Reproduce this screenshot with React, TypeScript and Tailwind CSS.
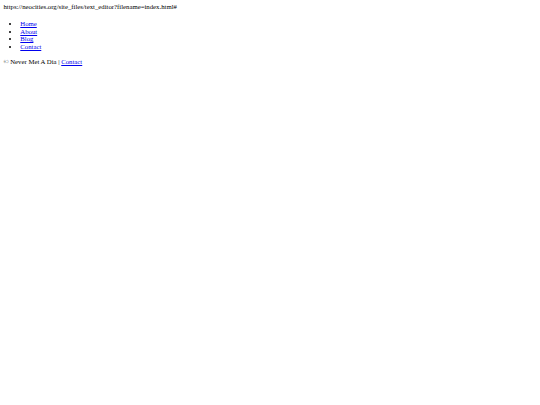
import React from "react";

export default function App() {
  return (
    <div className="min-h-[405px] w-[540px] bg-white text-black p-[3.4px] text-[6.75px] leading-[1.15]" style={{ fontFamily: '"Liberation Serif", "Times New Roman", serif' }}>
      <div>https://neocities.org/site_files/text_editor?filename=index.html#</div>
      <ul className="list-disc pl-[16.9px] mt-[8.75px] mb-[6.75px]">
        <li><a href="#" className="text-[#0000ee] underline">Home</a></li>
        <li><a href="#" className="text-[#0000ee] underline">About</a></li>
        <li><a href="#" className="text-[#0000ee] underline">Blog</a></li>
        <li><a href="#" className="text-[#0000ee] underline">Contact</a></li>
      </ul>
      <div>© Never Met A Dia | <a href="#" className="text-[#0000ee] underline">Contact</a></div>
    </div>
  );
}
